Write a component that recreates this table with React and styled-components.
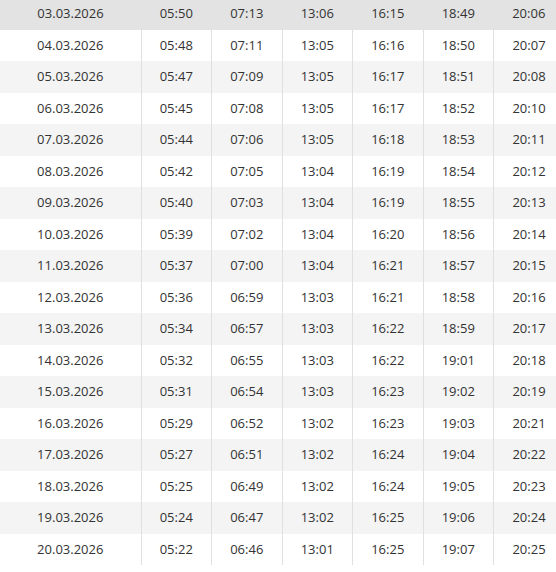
import React from "react";
import styled, { createGlobalStyle } from "styled-components";

const Global = createGlobalStyle`
  html, body { margin: 0; padding: 0; overflow: hidden; background: #fff; }
  body { font-family: "Open Sans", "Noto Sans", sans-serif; }
`;

const Wrap = styled.div`
  width: 564px;
  margin-top: -2px;
`;

const Table = styled.table`
  width: 100%;
  border-collapse: collapse;
  table-layout: fixed;
  font-size: 13px;
  color: #333;
`;

const Row = styled.tr`
  background: ${(p) => (p.$current ? "#e3e3e3" : p.$odd ? "#f4f4f4" : "#fff")};
`;

const Cell = styled.td`
  height: 31.5px;
  padding: 0;
  text-align: center;
  vertical-align: middle;
  line-height: 19px;
  box-sizing: border-box;
  border-left: ${(p) => (p.$first || p.$current ? "none" : "1px solid #e0e0e0")};
`;

const rows = [
  ["03.03.2026", "05:50", "07:13", "13:06", "16:15", "18:49", "20:06"],
  ["04.03.2026", "05:48", "07:11", "13:05", "16:16", "18:50", "20:07"],
  ["05.03.2026", "05:47", "07:09", "13:05", "16:17", "18:51", "20:08"],
  ["06.03.2026", "05:45", "07:08", "13:05", "16:17", "18:52", "20:10"],
  ["07.03.2026", "05:44", "07:06", "13:05", "16:18", "18:53", "20:11"],
  ["08.03.2026", "05:42", "07:05", "13:04", "16:19", "18:54", "20:12"],
  ["09.03.2026", "05:40", "07:03", "13:04", "16:19", "18:55", "20:13"],
  ["10.03.2026", "05:39", "07:02", "13:04", "16:20", "18:56", "20:14"],
  ["11.03.2026", "05:37", "07:00", "13:04", "16:21", "18:57", "20:15"],
  ["12.03.2026", "05:36", "06:59", "13:03", "16:21", "18:58", "20:16"],
  ["13.03.2026", "05:34", "06:57", "13:03", "16:22", "18:59", "20:17"],
  ["14.03.2026", "05:32", "06:55", "13:03", "16:22", "19:01", "20:18"],
  ["15.03.2026", "05:31", "06:54", "13:03", "16:23", "19:02", "20:19"],
  ["16.03.2026", "05:29", "06:52", "13:02", "16:23", "19:03", "20:21"],
  ["17.03.2026", "05:27", "06:51", "13:02", "16:24", "19:04", "20:22"],
  ["18.03.2026", "05:25", "06:49", "13:02", "16:24", "19:05", "20:23"],
  ["19.03.2026", "05:24", "06:47", "13:02", "16:25", "19:06", "20:24"],
  ["20.03.2026", "05:22", "06:46", "13:01", "16:25", "19:07", "20:25"],
];

export default function App() {
  return (
    <>
      <Global />
      <Wrap>
        <Table>
          <colgroup>
            <col style={{ width: "25%" }} />
            {[0, 1, 2, 3, 4, 5].map((i) => (
              <col key={i} style={{ width: "12.5%" }} />
            ))}
          </colgroup>
          <tbody>
            {rows.map((r, i) => (
              <Row key={r[0]} $current={i === 0} $odd={i % 2 === 0}>
                {r.map((v, j) => (
                  <Cell key={j} $first={j === 0} $current={i === 0}>
                    {v}
                  </Cell>
                ))}
              </Row>
            ))}
          </tbody>
        </Table>
      </Wrap>
    </>
  );
}
